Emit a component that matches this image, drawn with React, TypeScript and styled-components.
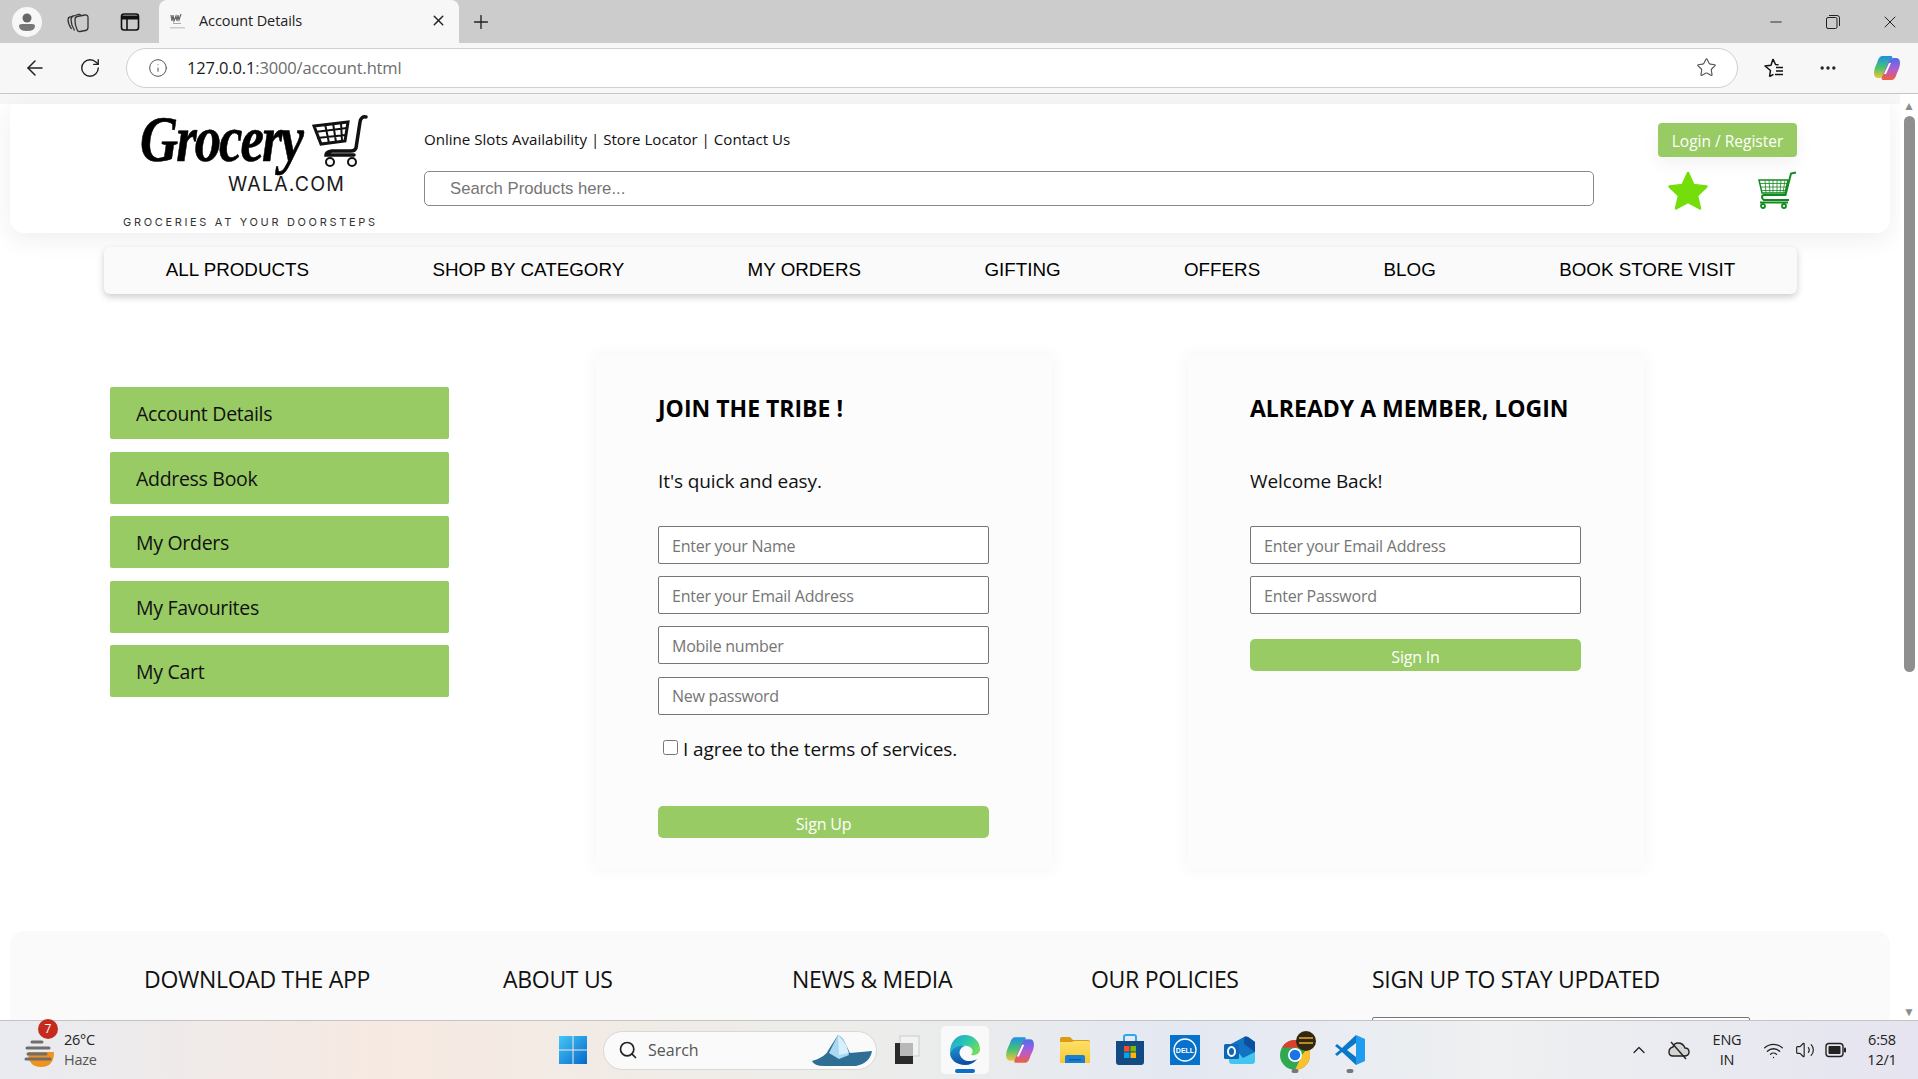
import styled, { createGlobalStyle } from 'styled-components';
import {
  ArrowLeft,
  ChevronUp,
  Info,
  Minus,
  MoreHorizontal,
  Plus,
  RotateCw,
  Search,
  Star,
  Volume2,
  Wifi,
  X,
} from 'lucide-react';

const GREEN = '#98cb64';
const UI_FONT = '"Open Sans", "Noto Sans", sans-serif';

const GlobalStyle = createGlobalStyle`
  html, body {
    margin: 0;
    height: 100%;
    overflow: hidden;
    font-family: ${UI_FONT};
    color: #000;
  }
  * { box-sizing: border-box; }
`;

const Screen = styled.div`
  display: flex;
  flex-direction: column;
  width: 1918px;
  height: 1079px;
  overflow: hidden;
`;

/* browser chrome */
const TabStrip = styled.div`
  display: flex;
  align-items: flex-end;
  flex: 0 0 43px;
  background: #cccccc;
`;

const Slot = styled.div<{ $w: number; $h?: number; $gap?: number }>`
  display: flex;
  align-items: center;
  justify-content: center;
  flex: 0 0 ${(p) => p.$w}px;
  height: ${(p) => p.$h ?? 43}px;
  margin-left: ${(p) => p.$gap ?? 0}px;
  color: #222;
`;

const Tab = styled.div`
  display: flex;
  align-items: center;
  width: 300px;
  height: 43px;
  margin-left: 2px;
  padding: 0 12px 2px 10px;
  background: #f7f7f7;
  border-radius: 8px 8px 0 0;
`;

const TabTitle = styled.span`
  flex: 1;
  margin-left: 12px;
  font-size: 14.5px;
  letter-spacing: -0.1px;
  color: #222;
`;

const WindowControls = styled.div`
  display: flex;
  margin-left: auto;
`;

const Toolbar = styled.div`
  display: flex;
  align-items: center;
  flex: 0 0 51px;
  padding: 0 11px 1px 8px;
  background: #f7f7f7;
  border-bottom: 1px solid #c6c6c6;
`;

const AddressBar = styled.div`
  display: flex;
  align-items: center;
  flex: 1;
  height: 40px;
  margin-left: 8px;
  padding: 0 20px 0 21px;
  background: #fff;
  border: 1px solid #cfcfcf;
  border-radius: 20px;
`;

const Url = styled.span`
  flex: 1;
  margin-left: 19px;
  font-size: 16.5px;
  letter-spacing: -0.15px;
  color: #6d6d6d;
  b {
    font-weight: 400;
    color: #1b1b1b;
  }
`;

/* page */
const Viewport = styled.div`
  display: flex;
  flex: 1;
  min-height: 0;
  overflow: hidden;
`;

const Page = styled.div`
  flex: 1;
  padding: 10px 10px 0 10px;
  overflow: hidden;
  background: linear-gradient(#f7f7f7 0, #f7f7f7 10px, #fff 10px);
`;

const Scrollbar = styled.div`
  display: flex;
  flex-direction: column;
  align-items: center;
  flex: 0 0 18px;
  padding: 6px 0 3px;
  background: #fff;
  color: #8c8c8c;
  font-size: 12px;
  line-height: 11px;
`;

const ScrollThumb = styled.div`
  width: 11px;
  height: 556px;
  margin: 5px 0 auto 1px;
  background: #8f8f8f;
  border-radius: 6px;
`;

const ScrollArrow = styled.span`
  display: block;
`;

const SiteHeader = styled.header`
  display: flex;
  height: 129px;
  background: #fff;
  border-radius: 0 0 14px 14px;
  box-shadow: 0 6px 24px rgba(30, 40, 60, 0.08);
`;

const LogoBlock = styled.div`
  flex: 0 0 414px;
  padding: 4px 0 0 113px;
`;

const LogoTop = styled.div`
  display: flex;
  align-items: flex-start;
  height: 64px;
  padding-left: 17px;
`;

const LogoScript = styled.span`
  display: block;
  flex: 0 0 172px;
  width: 172px;
  min-width: 0;
  font-family: 'Liberation Serif', serif;
  font-style: italic;
  font-weight: 700;
  font-size: 66px;
  line-height: 62px;
  letter-spacing: -2.5px;
  white-space: nowrap;
  transform: scaleX(0.8);
  transform-origin: left center;
  -webkit-text-stroke: 0.6px #000;
`;

const LogoCartWrap = styled.div`
  margin-top: 7px;
`;

const LogoDomain = styled.div`
  padding-left: 105px;
  font-family: Inter, sans-serif;
  font-size: 19.5px;
  line-height: 24px;
  letter-spacing: 1.2px;
  color: #1a1a1a;
`;

const Tagline = styled.div`
  margin-top: 19px;
  font-family: Inter, sans-serif;
  font-size: 11px;
  line-height: 14px;
  letter-spacing: 2.67px;
  color: #333;
  white-space: nowrap;
`;

const HeaderMiddle = styled.div`
  flex: 0 0 1170px;
  padding-top: 24px;
`;

const TopLinks = styled.div`
  height: 43px;
  font-size: 15.1px;
  line-height: 22px;
  color: #111;
`;

const SearchInput = styled.input`
  display: block;
  width: 100%;
  height: 35px;
  padding: 0 25px;
  font-family: 'Liberation Sans', Arial, sans-serif;
  font-size: 16.7px;
  background: #fff;
  border: 1px solid #8a8a8a;
  border-radius: 5px;
  &::placeholder {
    color: #757575;
  }
`;

const HeaderRight = styled.div`
  flex: 0 0 139px;
  margin-left: 64px;
  padding-top: 19px;
`;

const LoginButton = styled.div`
  height: 34px;
  font-size: 15.5px;
  line-height: 36px;
  text-align: center;
  color: #fff;
  background: ${GREEN};
  border-radius: 4px;
  box-shadow: 0 6px 18px rgba(0, 0, 0, 0.06);
`;

const HeaderIcons = styled.div`
  display: flex;
  justify-content: space-between;
  margin-top: 14px;
  padding-left: 10px;
`;

const Nav = styled.nav`
  display: flex;
  justify-content: space-around;
  align-items: center;
  width: 1693px;
  height: 47px;
  margin: 14px 0 0 94px;
  padding-bottom: 2px;
  font-family: 'Liberation Sans', Arial, sans-serif;
  font-size: 18.8px;
  background: #fafafa;
  border-radius: 6px;
  box-shadow: 0 3px 7px rgba(0, 0, 0, 0.2);
`;

const Main = styled.main`
  display: flex;
  align-items: flex-start;
  margin: 61px 0 0 100px;
`;

const Sidebar = styled.div`
  display: flex;
  flex-direction: column;
  gap: 12.5px;
  flex: 0 0 339px;
  margin-right: 147px;
  padding-top: 32px;
`;

const SideButton = styled.div`
  height: 52px;
  padding-left: 26px;
  font-size: 19.5px;
  line-height: 54px;
  letter-spacing: -0.3px;
  color: #111;
  background: ${GREEN};
  border-radius: 2px;
`;

const Card = styled.section`
  flex: 0 0 456px;
  height: 514px;
  margin-right: 136px;
  padding: 37px 0 0 62px;
  background: #fcfcfc;
  box-shadow: 0 0 16px rgba(0, 0, 0, 0.05);
`;

const CardTitle = styled.h2`
  margin: 0;
  font-size: 23px;
  line-height: 32px;
  font-weight: 700;
`;

const CardLead = styled.p`
  margin: 41px 0 29px;
  font-size: 19px;
  line-height: 32px;
  letter-spacing: -0.1px;
  color: #111;
`;

const FieldStack = styled.div`
  display: flex;
  flex-direction: column;
  gap: 12.2px;
  width: 331px;
`;

const Field = styled.input`
  display: block;
  width: 100%;
  height: 38px;
  padding: 1px 13px 0;
  font-family: ${UI_FONT};
  font-size: 16px;
  letter-spacing: -0.25px;
  background: #fff;
  border: 1px solid #767676;
  border-radius: 2px;
  &::placeholder {
    color: #757575;
  }
`;

const AgreeRow = styled.label`
  display: flex;
  align-items: center;
  height: 32px;
  margin-top: 18px;
  font-size: 19px;
  letter-spacing: -0.1px;
  color: #111;
  input {
    width: 15px;
    height: 15px;
    margin: 0 5px 3px 5px;
  }
`;

const SubmitButton = styled.div<{ $top: number }>`
  width: 331px;
  height: 32px;
  margin-top: ${(p) => p.$top}px;
  font-size: 16px;
  line-height: 37px;
  letter-spacing: -0.2px;
  text-align: center;
  color: #fff;
  background: ${GREEN};
  border-radius: 5px;
`;

const Footer = styled.footer`
  display: grid;
  grid-template-columns: 359px 289px 299px 281px 1fr;
  height: 140px;
  margin-top: 62px;
  padding: 30px 0 0 134px;
  background: #fafafa;
  border-radius: 14px 14px 0 0;
`;

const FooterHeading = styled.h3`
  margin: 0;
  font-size: 23px;
  line-height: 36px;
  font-weight: 400;
  letter-spacing: -0.3px;
  color: #111;
  white-space: nowrap;
`;

const NewsletterField = styled.div`
  width: 378px;
  height: 37px;
  margin-top: 20px;
  background: #fff;
  border: 1px solid #767676;
  border-radius: 2px;
`;

/* taskbar */
const Taskbar = styled.div`
  display: flex;
  align-items: center;
  flex: 0 0 59px;
  padding-right: 7px;
  background: linear-gradient(90deg, #e9ebf1 0, #f6e9e1 20%, #ecedea 45%, #e4e8f2 62%, #eef0f1 78%, #e5e4f0 100%);
  border-top: 1px solid #c4c4c4;
`;

const Weather = styled.div`
  position: relative;
  display: flex;
  align-items: center;
  flex: 0 0 558px;
  padding-left: 24px;
`;

const WeatherBadge = styled.span`
  position: absolute;
  top: -11px;
  left: 38px;
  width: 20px;
  height: 20px;
  font-size: 12px;
  line-height: 20px;
  text-align: center;
  color: #fff;
  background: #c42b1c;
  border-radius: 50%;
`;

const WeatherText = styled.div`
  margin-left: 8px;
  font-size: 14.5px;
  line-height: 20px;
  letter-spacing: -0.3px;
  color: #222;
  span {
    display: block;
    color: #555;
  }
`;

const SearchPill = styled.div`
  display: flex;
  align-items: center;
  width: 274px;
  height: 39px;
  margin-left: 15px;
  padding: 0 2px 0 14px;
  font-size: 16px;
  color: #555;
  background: #fafafa;
  border: 1px solid #d8d8d8;
  border-radius: 20px;
  span {
    flex: 1;
    margin-left: 10px;
  }
`;

const AppSlot = styled.div<{ $w?: number; $active?: boolean; $dot?: boolean }>`
  position: relative;
  display: flex;
  align-items: center;
  justify-content: center;
  flex: 0 0 ${(p) => (p.$active ? 48 : p.$w ?? 55)}px;
  height: 48px;
  margin: 0 ${(p) => (p.$active ? 3.5 : 0)}px;
  border-radius: 5px;
  background: ${(p) => (p.$active ? 'rgba(255,255,255,0.7)' : 'transparent')};
  &::after {
    content: '';
    display: ${(p) => (p.$active || p.$dot ? 'block' : 'none')};
    position: absolute;
    bottom: 1px;
    left: 50%;
    width: ${(p) => (p.$active ? 20 : 7)}px;
    height: 4px;
    transform: translateX(-50%);
    border-radius: 3px;
    background: ${(p) => (p.$active ? '#0b6fc9' : '#777')};
  }
`;

const Tray = styled.div`
  display: flex;
  align-items: center;
  margin-left: auto;
  color: #222;
`;

const TrayText = styled.div<{ $w: number }>`
  flex: 0 0 ${(p) => p.$w}px;
  font-size: 14.5px;
  line-height: 20px;
  letter-spacing: -0.2px;
  text-align: center;
`;

const TrayIcon = styled.div<{ $w: number }>`
  display: flex;
  justify-content: center;
  flex: 0 0 ${(p) => p.$w}px;
`;

const Favicon = () => (
  <svg width="18" height="18" viewBox="0 0 18 18">
    <path d="M2 3l1 6 1-6 1 6 2-5 1 5 1-6 1 5 2-6" fill="none" stroke="#666" strokeWidth="1.2" />
    <rect x="4" y="11" width="8" height="1" fill="#aaa" />
    <rect x="1" y="15" width="15" height="1.5" fill="#ccc" />
  </svg>
);

const ProfileIcon = () => (
  <svg width="30" height="30" viewBox="0 0 30 30">
    <circle cx="15" cy="15" r="15" fill="#f7f7f7" />
    <circle cx="15" cy="11" r="4.5" fill="#666" />
    <path d="M7 19q0-2 3-2h10q3 0 3 2 0 5-8 5t-8-5z" fill="#777" />
  </svg>
);

const CollectionsIcon = () => (
  <svg width="22" height="22" viewBox="0 0 22 22" fill="none" stroke="#333" strokeWidth="1.3" strokeLinejoin="round">
    <path d="M4.500 18Q1 13 1 8.500 1 6.500 3 6l3-1" />
    <path d="M7.500 19.500Q4 14 4 8.500 4 5.500 6.500 5L11 3.500q2-.5 3 1" />
    <path d="M8 9q0-3 2-3.500L18 4q3-.3 3 2.500v10q0 2.500-2.500 3L13 20.500q-2 .5-3-2Q8 14 8 9z" />
  </svg>
);

const TabsIcon = () => (
  <svg width="20" height="20" viewBox="0 0 20 20" fill="none" stroke="#111" strokeWidth="1.6">
    <rect x="1.500" y="2" width="17" height="16" rx="2.500" />
    <path d="M1.500 5.500h17" strokeWidth="4" />
    <path d="M7 7v11" />
  </svg>
);

const RestoreIcon = () => (
  <svg width="14" height="14" viewBox="0 0 14 14" fill="none" stroke="#222" strokeWidth="1">
    <rect x="0.500" y="2.500" width="10.500" height="11" rx="1.500" />
    <path d="M3 .5h8q2.500 0 2.500 2.500v8" />
  </svg>
);

const FavoritesIcon = () => (
  <svg width="22" height="22" viewBox="0 0 22 22" fill="none" stroke="#111" strokeWidth="1.500" strokeLinejoin="round">
    <path d="M10 2l2.500 5.500 3 .3M6.500 19.500l1-6L2 9l6-.8L10 2M6.500 19.500l4-2.200" />
    <path d="M13 10.500h7M13 14h7M12 17.500h8" />
  </svg>
);

const CopilotIcon = ({ size = 28 }: { size?: number }) => (
  <svg width={size} height={size} viewBox="0 0 28 28">
    <defs>
      <linearGradient id="cpA" x1="0" y1="0" x2="0" y2="1">
        <stop offset="0" stopColor="#1d8fe8" />
        <stop offset="0.55" stopColor="#4cc46a" />
        <stop offset="1" stopColor="#f3c33a" />
      </linearGradient>
      <linearGradient id="cpB" x1="0" y1="0" x2="0" y2="1">
        <stop offset="0" stopColor="#4a6fe8" />
        <stop offset="0.5" stopColor="#b05bd8" />
        <stop offset="1" stopColor="#f0603e" />
      </linearGradient>
    </defs>
    <path d="M9 2h9q2 0 1 3l-6 14q-2 5-6 5H5Q1 24 1 19q0-4 3-10 2-7 5-7z" fill="url(#cpA)" />
    <path d="M19 26h-9q-2 0-1-3l6-14q2-5 6-5h2q4 0 4 5 0 4-3 10-2 7-5 7z" fill="url(#cpB)" />
    <path d="M16 9l-5 11h2l5-11z" fill="#fff" />
  </svg>
);

const GreenStar = () => (
  <svg width="40" height="39" viewBox="0 0 40 39">
    <path
      d="M20 2l5.500 12 13 1.500-9.500 9 3 13L20 31 8 37.500l3-13-9.500-9 13-1.500z"
      fill="#74de0a"
      stroke="#74de0a"
      strokeWidth="2.500"
      strokeLinejoin="round"
    />
  </svg>
);

const GreenCart = () => (
  <svg width="39" height="39" viewBox="0 0 39 39" fill="none" stroke="#138a1f">
    <path d="M38 1.500l-5 1-5.500 21.500H6q-2 0-2 2t2 3h25" strokeWidth="2" />
    <path d="M1 9h29l-3 13H4z" strokeWidth="1.500" />
    <path d="M1.500 12.500h28M2.500 16h26M3.500 19.500h24M7 9l1 13M11 9l1 13M15 9v13M19 9v13M23 9l-1 13M27 9l-2 13" strokeWidth="0.8" />
    <circle cx="5" cy="35" r="2" strokeWidth="1.800" />
    <circle cx="26" cy="35" r="2" strokeWidth="1.800" />
    <path d="M2 31.500h28" strokeWidth="2" />
  </svg>
);

const LogoCart = () => (
  <svg width="56" height="54" viewBox="0 0 56 54" fill="none" stroke="#111">
    <path d="M54 2q-5-1-6 5l-4 26q-1 3-5 3H20q-6 1-6 4h28" strokeWidth="3.500" strokeLinecap="round" />
    <path d="M2 11l34-4-3 19-24 3z" strokeWidth="3" />
    <path d="M3 17l32-4M5 23l29-3M13 9l4 19M21 8l3 19M29 8l1 18" strokeWidth="2" />
    <circle cx="18" cy="47" r="4" strokeWidth="2" />
    <circle cx="40" cy="47" r="4" strokeWidth="2" />
  </svg>
);

const WeatherIcon = () => (
  <svg width="32" height="36" viewBox="0 0 32 36">
    <path d="M4 20h26q0 15-13 15T4 20z" fill="#f0921e" />
    <path d="M8 10h10M3 16h22M4 22h18M2 27h24" stroke="#6e6e6e" strokeWidth="3" strokeLinecap="round" />
  </svg>
);

const WindowsLogo = () => (
  <svg width="30" height="30" viewBox="0 0 30 30">
    <defs>
      <linearGradient id="win" x1="0" y1="0" x2="1" y2="1">
        <stop offset="0" stopColor="#45c8f8" />
        <stop offset="1" stopColor="#0668c9" />
      </linearGradient>
    </defs>
    <path d="M1 1h13.500v13.500H1zM15.500 1H29v13.500H15.500zM1 15.500h13.500V29H1zM15.500 15.500H29V29H15.500z" fill="url(#win)" />
  </svg>
);

const SearchArt = () => (
  <svg width="62" height="34" viewBox="0 0 62 34">
    <path d="M0 28q14-4 17-12l9-14q5 2 8 10l4 8 22-2q-2 12-16 15H12Q2 33 0 28z" fill="#2f6f95" />
    <path d="M17 20l9-18q5 2 8 10l3 10-10 4z" fill="#a9d9f2" />
    <path d="M26 2l1 20 10-2-3-8z" fill="#d8f0fb" />
  </svg>
);

const TaskViewIcon = () => (
  <svg width="26" height="30" viewBox="0 0 26 30">
    <rect x="6" y="1" width="19" height="20" fill="#f2f2f2" stroke="#ccc" />
    <rect x="1" y="8" width="18" height="21" fill="#2a2a2a" />
    <rect x="6" y="8" width="13" height="13" fill="#b8b8b8" />
  </svg>
);

const EdgeIcon = () => (
  <svg width="32" height="32" viewBox="0 0 32 32">
    <defs>
      <linearGradient id="edgeA" x1="0" y1="0" x2="1" y2="0.6">
        <stop offset="0" stopColor="#1aa3d6" />
        <stop offset="0.55" stopColor="#2cc7b0" />
        <stop offset="1" stopColor="#6fdc5c" />
      </linearGradient>
      <linearGradient id="edgeB" x1="0" y1="0" x2="0.3" y2="1">
        <stop offset="0" stopColor="#1e9ad8" />
        <stop offset="1" stopColor="#0c4fa0" />
      </linearGradient>
    </defs>
    <path d="M16 1c9 0 15 7 15 14 0 5-5 7-9 6 3-3 2-8-4-9C11 11 5 14 1 19 1 8 7 1 16 1z" fill="url(#edgeA)" />
    <path d="M1 19c3-6 10-9 15-7-4 1-6.500 5-5 9 2 6 10 8 17 4-3 4-7 6-12 6C8 31 1 26 1 19z" fill="url(#edgeB)" />
  </svg>
);

const FolderIcon = () => (
  <svg width="30" height="28" viewBox="0 0 30 28">
    <defs>
      <linearGradient id="folder" x1="0" y1="0" x2="0" y2="1">
        <stop offset="0" stopColor="#fde06a" />
        <stop offset="1" stopColor="#f8c92e" />
      </linearGradient>
    </defs>
    <path d="M0 3q0-2 2-2h8l3 3h15q2 0 2 2v5H0z" fill="#d99c12" />
    <path d="M0 6h12l2-1h14q2 0 2 2v20H0z" fill="url(#folder)" />
    <path d="M5 27v-6q0-2 2-2h16q2 0 2 2v6z" fill="#1a7fd0" />
    <rect x="9" y="23" width="12" height="1.500" fill="#0c5ea8" />
  </svg>
);

const StoreIcon = () => (
  <svg width="30" height="32" viewBox="0 0 30 32">
    <path d="M9 7V3q0-2 2-2h8q2 0 2 2v4" fill="none" stroke="#2fa8ea" strokeWidth="2" />
    <path d="M1 7h28v21q0 3-3 3H4q-3 0-3-3z" fill="#134a84" />
    <rect x="9" y="12" width="5.500" height="5.500" fill="#f25022" />
    <rect x="15.500" y="12" width="5.500" height="5.500" fill="#7fba00" />
    <rect x="9" y="18.500" width="5.500" height="5.500" fill="#00a4ef" />
    <rect x="15.500" y="18.500" width="5.500" height="5.500" fill="#ffb900" />
  </svg>
);

const DellIcon = () => (
  <svg width="30" height="30" viewBox="0 0 30 30">
    <rect width="30" height="30" fill="#0672cb" />
    <circle cx="15" cy="15" r="11" fill="none" stroke="#fff" strokeWidth="1.300" />
    <text x="15" y="17.500" textAnchor="middle" fontSize="7" fontWeight="700" fill="#fff" fontFamily="Liberation Sans">
      DELL
    </text>
  </svg>
);

const OutlookIcon = () => (
  <svg width="32" height="28" viewBox="0 0 32 28">
    <path d="M5 8h26v17q0 3-3 3H8q-3 0-3-3z" fill="#42c6f0" />
    <path d="M7 8L20 1q2-1 4 0l7 5v10L19 22z" fill="#1272c4" />
    <path d="M20 1q2-1 4 0l7 5v10l-11-8z" fill="#0b4f9e" />
    <rect x="0" y="8" width="15" height="15" rx="1.500" fill="#0d66b8" />
    <ellipse cx="7.500" cy="15.500" rx="3.500" ry="4.500" fill="none" stroke="#fff" strokeWidth="2" />
  </svg>
);

const ChromeIcon = () => (
  <svg width="46" height="40" viewBox="0 0 46 40">
    <circle cx="23" cy="25" r="15" fill="#2fa84f" />
    <path d="M10 17.500A15 15 0 0 1 36 17.500H23z" fill="#e33b2e" />
    <path d="M36 17.500A15 15 0 0 1 23 40l7-15z" fill="#fbc02d" />
    <circle cx="23" cy="25" r="7" fill="#fff" />
    <circle cx="23" cy="25" r="5.300" fill="#1a73e8" />
    <circle cx="34" cy="11" r="10" fill="#33270f" />
    <path d="M27 8h14M27 13h14" stroke="#b98a2b" strokeWidth="2" />
  </svg>
);

const VsCodeIcon = () => (
  <svg width="32" height="32" viewBox="0 0 32 32">
    <path d="M22 1L8 14 3 10l-2 2 5 4-5 4 2 2 5-4 14 13v-8l-9-7 9-7z" fill="#0a78c8" />
    <path d="M22 1l9 4v22l-9 4V23l0-14z" fill="#1f9cf0" />
  </svg>
);

const CloudOffIcon = () => (
  <svg width="22" height="20" viewBox="0 0 22 20" fill="none" stroke="#222" strokeWidth="1.400">
    <path d="M5 16h11q5 0 5-4 0-4-4-4-2-5-7-5-4 0-5 4-4 1-4 5 0 4 4 4z" fill="#d4d4d4" />
    <path d="M3 2l15 17" />
  </svg>
);

const BatteryIcon = () => (
  <svg width="22" height="16" viewBox="0 0 22 16">
    <rect x="1" y="1.500" width="17" height="13" rx="3" fill="none" stroke="#222" strokeWidth="1.400" />
    <rect x="3.500" y="4" width="12" height="8" rx="1" fill="#222" />
    <rect x="19" y="5.500" width="2" height="5" rx="1" fill="#222" />
  </svg>
);

const NAV_ITEMS = ['ALL PRODUCTS', 'SHOP BY CATEGORY', 'MY ORDERS', 'GIFTING', 'OFFERS', 'BLOG', 'BOOK STORE VISIT'];
const SIDE_ITEMS = ['Account Details', 'Address Book', 'My Orders', 'My Favourites', 'My Cart'];
const SIGNUP_FIELDS = ['Enter your Name', 'Enter your Email Address', 'Mobile number', 'New password'];
const LOGIN_FIELDS = ['Enter your Email Address', 'Enter Password'];
const FOOTER_HEADINGS = ['DOWNLOAD THE APP', 'ABOUT US', 'NEWS & MEDIA', 'OUR POLICIES'];

export default function App() {
  return (
    <Screen>
      <GlobalStyle />
      <TabStrip>
        <Slot $w={53}>
          <ProfileIcon />
        </Slot>
        <Slot $w={50}>
          <CollectionsIcon />
        </Slot>
        <Slot $w={54}>
          <TabsIcon />
        </Slot>
        <Tab>
          <Favicon />
          <TabTitle>Account Details</TabTitle>
          <X size={17} color="#222" />
        </Tab>
        <Slot $w={44}>
          <Plus size={22} strokeWidth={1.5} />
        </Slot>
        <WindowControls>
          <Slot $w={57}>
            <Minus size={18} strokeWidth={1.2} />
          </Slot>
          <Slot $w={57}>
            <RestoreIcon />
          </Slot>
          <Slot $w={57}>
            <X size={20} strokeWidth={1.2} />
          </Slot>
        </WindowControls>
      </TabStrip>
      <Toolbar>
        <Slot $w={54} $h={40}>
          <ArrowLeft size={24} strokeWidth={1.5} />
        </Slot>
        <Slot $w={56} $h={40}>
          <RotateCw size={22} strokeWidth={1.5} />
        </Slot>
        <AddressBar>
          <Info size={20} strokeWidth={1.2} color="#555" />
          <Url>
            <b>127.0.0.1</b>:3000/account.html
          </Url>
          <Star size={21} strokeWidth={1.3} color="#555" />
        </AddressBar>
        <Slot $w={72} $h={40}>
          <FavoritesIcon />
        </Slot>
        <Slot $w={36} $h={40}>
          <MoreHorizontal size={20} />
        </Slot>
        <Slot $w={41} $h={40} $gap={20}>
          <CopilotIcon />
        </Slot>
      </Toolbar>
      <Viewport>
        <Page>
          <SiteHeader>
            <LogoBlock>
              <LogoTop>
                <LogoScript>Grocery</LogoScript>
                <LogoCartWrap>
                  <LogoCart />
                </LogoCartWrap>
              </LogoTop>
              <LogoDomain>WALA.COM</LogoDomain>
              <Tagline>GROCERIES AT YOUR DOORSTEPS</Tagline>
            </LogoBlock>
            <HeaderMiddle>
              <TopLinks>Online Slots Availability | Store Locator | Contact Us</TopLinks>
              <SearchInput placeholder="Search Products here..." />
            </HeaderMiddle>
            <HeaderRight>
              <LoginButton>Login / Register</LoginButton>
              <HeaderIcons>
                <GreenStar />
                <GreenCart />
              </HeaderIcons>
            </HeaderRight>
          </SiteHeader>
          <Nav>
            {NAV_ITEMS.map((item) => (
              <span key={item}>{item}</span>
            ))}
          </Nav>
          <Main>
            <Sidebar>
              {SIDE_ITEMS.map((item) => (
                <SideButton key={item}>{item}</SideButton>
              ))}
            </Sidebar>
            <Card>
              <CardTitle>JOIN THE TRIBE !</CardTitle>
              <CardLead>It's quick and easy.</CardLead>
              <FieldStack>
                {SIGNUP_FIELDS.map((f) => (
                  <Field key={f} placeholder={f} />
                ))}
              </FieldStack>
              <AgreeRow>
                <input type="checkbox" />I agree to the terms of services.
              </AgreeRow>
              <SubmitButton $top={41}>Sign Up</SubmitButton>
            </Card>
            <Card>
              <CardTitle>ALREADY A MEMBER, LOGIN</CardTitle>
              <CardLead>Welcome Back!</CardLead>
              <FieldStack>
                {LOGIN_FIELDS.map((f) => (
                  <Field key={f} placeholder={f} />
                ))}
              </FieldStack>
              <SubmitButton $top={25}>Sign In</SubmitButton>
            </Card>
          </Main>
          <Footer>
            {FOOTER_HEADINGS.map((h) => (
              <FooterHeading key={h}>{h}</FooterHeading>
            ))}
            <div>
              <FooterHeading>SIGN UP TO STAY UPDATED</FooterHeading>
              <NewsletterField />
            </div>
          </Footer>
        </Page>
        <Scrollbar>
          <ScrollArrow>▲</ScrollArrow>
          <ScrollThumb />
          <ScrollArrow>▼</ScrollArrow>
        </Scrollbar>
      </Viewport>
      <Taskbar>
        <Weather>
          <WeatherIcon />
          <WeatherBadge>7</WeatherBadge>
          <WeatherText>
            26°C
            <span>Haze</span>
          </WeatherText>
        </Weather>
        <WindowsLogo />
        <SearchPill>
          <Search size={20} color="#222" />
          <span>Search</span>
          <SearchArt />
        </SearchPill>
        <AppSlot $w={60}>
          <TaskViewIcon />
        </AppSlot>
        <AppSlot $active>
          <EdgeIcon />
        </AppSlot>
        <AppSlot>
          <CopilotIcon size={30} />
        </AppSlot>
        <AppSlot>
          <FolderIcon />
        </AppSlot>
        <AppSlot>
          <StoreIcon />
        </AppSlot>
        <AppSlot>
          <DellIcon />
        </AppSlot>
        <AppSlot>
          <OutlookIcon />
        </AppSlot>
        <AppSlot $dot>
          <ChromeIcon />
        </AppSlot>
        <AppSlot $dot>
          <VsCodeIcon />
        </AppSlot>
        <Tray>
          <TrayIcon $w={40}>
            <ChevronUp size={20} strokeWidth={1.5} />
          </TrayIcon>
          <TrayIcon $w={40}>
            <CloudOffIcon />
          </TrayIcon>
          <TrayText $w={56}>
            ENG
            <br />
            IN
          </TrayText>
          <TrayIcon $w={36}>
            <Wifi size={21} strokeWidth={1.5} />
          </TrayIcon>
          <TrayIcon $w={28}>
            <Volume2 size={20} strokeWidth={1.4} />
          </TrayIcon>
          <TrayIcon $w={34}>
            <BatteryIcon />
          </TrayIcon>
          <TrayText $w={58}>
            6:58
            <br />
            12/1
          </TrayText>
        </Tray>
      </Taskbar>
    </Screen>
  );
}
